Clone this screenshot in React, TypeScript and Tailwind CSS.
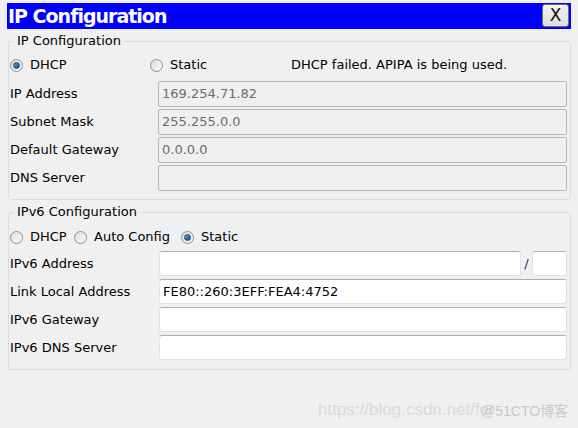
import React from "react";

const font = { fontFamily: '"DejaVu Sans", Verdana, sans-serif' };

function Radio({ checked }: { checked?: boolean }) {
  return (
    <span className="relative inline-flex h-[13px] w-[13px] shrink-0 items-center justify-center rounded-full border border-[#8f8f8f] bg-gradient-to-br from-[#dcdcdc] to-[#fbfbfb]">
      {checked && (
        <span className="h-[7px] w-[7px] rounded-full bg-gradient-to-br from-[#5aa2d6] to-[#0d4a86] border border-[#174e7c]" />
      )}
    </span>
  );
}

function RadioItem({ checked, label, className }: { checked?: boolean; label: string; className?: string }) {
  return (
    <div className={"flex items-center gap-[7px] " + (className ?? "")}>
      <Radio checked={checked} />
      <span>{label}</span>
    </div>
  );
}

function DisabledField({ label, value }: { label: string; value?: string }) {
  return (
    <div className="flex h-[26px] items-center">
      <div className="w-[148px] shrink-0 text-[#000]">{label}</div>
      <div className="flex h-full flex-1 items-center rounded-[2px] border border-[#b5b5b5] bg-[#f0f0f0] pl-[3px] text-[#6d6d6d]">
        {value}
      </div>
    </div>
  );
}

function EnabledBox({ value, className }: { value?: string; className?: string }) {
  return (
    <div
      className={
        "flex h-full items-center rounded-[3px] border border-[#dfe3e8] border-t-[#abadb3] bg-white pl-[3px] text-black " +
        (className ?? "")
      }
    >
      {value}
    </div>
  );
}

function EnabledField({ label, value, prefix }: { label: string; value?: string; prefix?: boolean }) {
  return (
    <div className="flex h-[25px] items-center">
      <div className="w-[149px] shrink-0">{label}</div>
      {prefix ? (
        <div className="flex h-full flex-1 items-center">
          <EnabledBox className="flex-1" />
          <span className="w-[11px] text-center text-[#1a2d6e]">/</span>
          <EnabledBox className="w-[35px]" />
        </div>
      ) : (
        <EnabledBox value={value} className="flex-1" />
      )}
    </div>
  );
}

export default function App() {
  return (
    <div className="relative h-[428px] w-[578px] overflow-hidden bg-[#f0f0f0] text-[13px] text-black" style={font}>
      <div className="pt-[3px] pl-[7px] pr-[7px]">
        <div className="flex h-[26px] items-center justify-between bg-[#0000ff]">
          <span
            className="pl-[1px] text-[19px] font-bold leading-none tracking-[-1px] text-white"
            style={font}
          >
            IP Configuration
          </span>
          <button className="mr-[2px] mb-[1px] flex h-[23px] w-[27px] items-center justify-center rounded-[3px] border border-[#707070] bg-gradient-to-b from-[#f2f2f2] to-[#dddddd] text-[17px] leading-none text-[#111]">
            X
          </button>
        </div>
      </div>

      <div className="mt-[12px] ml-[8px] mr-[7px]">
        <div className="relative h-[159px] rounded-[3px] border border-[#d5dfe5] pt-[15px] pl-[1px] pr-[3px]">
          <span className="absolute -top-[9px] left-[5px] bg-[#f0f0f0] px-[3px] leading-[16px]">IP Configuration</span>
          <div className="flex h-[16px] items-center">
            <RadioItem checked label="DHCP" className="w-[140px]" />
            <RadioItem label="Static" className="w-[141px]" />
            <span>DHCP failed. APIPA is being used.</span>
          </div>
          <div className="mt-[8px] flex flex-col gap-[2px]">
            <DisabledField label="IP Address" value="169.254.71.82" />
            <DisabledField label="Subnet Mask" value="255.255.0.0" />
            <DisabledField label="Default Gateway" value="0.0.0.0" />
            <DisabledField label="DNS Server" />
          </div>
        </div>

        <div className="relative mt-[12px] h-[158px] rounded-[3px] border border-[#d5dfe5] pt-[16px] pl-[1px] pr-[3px]">
          <span className="absolute -top-[9px] left-[5px] bg-[#f0f0f0] px-[3px] leading-[16px]">IPv6 Configuration</span>
          <div className="flex h-[16px] items-center">
            <RadioItem label="DHCP" className="w-[64px]" />
            <RadioItem label="Auto Config" className="w-[107px]" />
            <RadioItem checked label="Static" />
          </div>
          <div className="mt-[6px] flex flex-col gap-[3px]">
            <EnabledField label="IPv6 Address" prefix />
            <EnabledField label="Link Local Address" value="FE80::260:3EFF:FEA4:4752" />
            <EnabledField label="IPv6 Gateway" />
            <EnabledField label="IPv6 DNS Server" />
          </div>
        </div>
      </div>

      <div
        className="pointer-events-none absolute left-[318px] top-[399px] whitespace-nowrap text-[17px] leading-[22px] text-[#dadada]"
        style={{ fontFamily: '"Liberation Sans", "Noto Sans CJK SC", sans-serif' }}
      >
        https://blog.csdn.net/for
      </div>
      <div
        className="pointer-events-none absolute left-[481px] top-[400px] whitespace-nowrap text-[14px] leading-[22px] text-[#c9c9c9]"
        style={{ fontFamily: '"Liberation Sans", "Noto Sans CJK SC", sans-serif' }}
      >
        @51CTO博客
      </div>
    </div>
  );
}
